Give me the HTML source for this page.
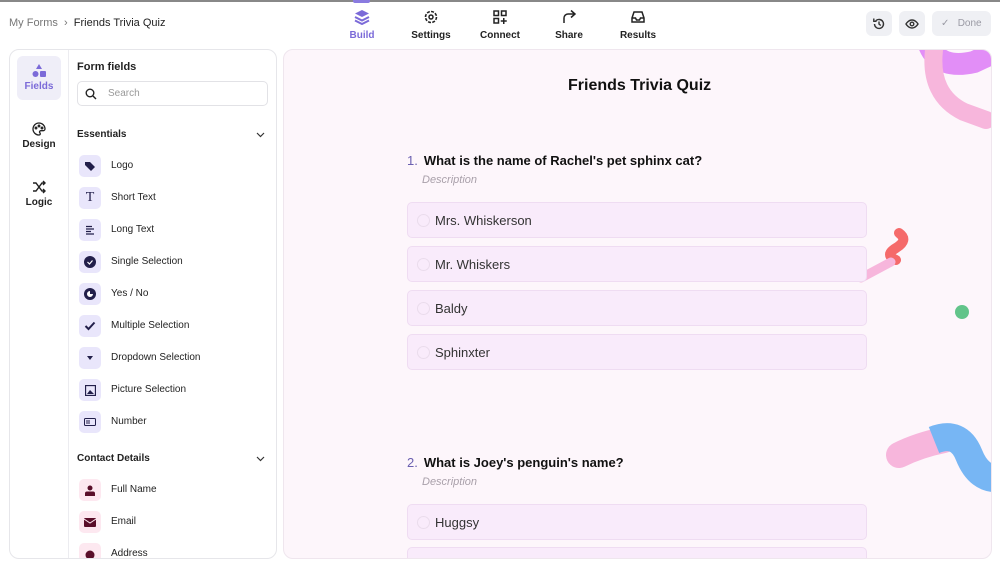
<!DOCTYPE html>
<html><head><meta charset="utf-8"><style>
*{box-sizing:border-box;margin:0;padding:0}
body{width:1000px;height:568px;overflow:hidden;background:#fff;font-family:"Liberation Sans",sans-serif;color:#222;position:relative}
.abs{position:absolute}
span{white-space:nowrap}
.top{left:0;top:0;width:1000px;height:2px;background:#888}
.crumb{left:9px;top:17px;font-size:11px;color:#777;white-space:nowrap}
.crumb b{color:#222;font-weight:normal}
.nav{top:9px;width:60px;text-align:center;font-size:10px;font-weight:bold;color:#222}
.nav svg{display:block;margin:0 auto 5px}
.btn{top:11px;height:25px;border-radius:6px;background:#eff0f4}
.panel{left:9px;top:49px;width:268px;height:510px;border:1px solid #e6e6ea;border-radius:10px;background:#fff;overflow:hidden}
.rail{left:0;top:0;width:59px;height:510px;border-right:1px solid #ececf0}
.ri{left:7px;width:44px;text-align:center;font-size:10px;font-weight:bold;color:#222}
.item{left:69px;width:180px;height:22px;font-size:10px;color:#222}
.item .ic{position:absolute;left:0;top:0;width:22px;height:22px;border-radius:5px;background:#e9e6fb;display:flex;align-items:center;justify-content:center}
.item span{position:absolute;left:32px;top:5px}
.sec{left:67px;font-size:10px;font-weight:bold;white-space:nowrap}
.canvas{left:283px;top:49px;width:709px;height:510px;border:1px solid #efe6ee;border-radius:10px;background:#fdf6fb;overflow:hidden}
.opt{left:123px;width:460px;height:36px;border:1px solid #efdcf2;border-radius:5px;background:#f9ebfb;font-size:13px;color:#333}
.opt i{position:absolute;left:9px;top:11px;width:13px;height:13px;border-radius:50%;border:1px solid #eadcec}
.opt span{position:absolute;left:27px;top:10px}
.q{left:123px;font-size:13px;font-weight:bold;color:#111;white-space:nowrap}
.q em{font-style:normal;font-weight:normal;color:#6a5fb0;margin-right:6px}
.desc{left:138px;font-size:11px;font-style:italic;color:#a9a0aa}
</style></head><body>
<div class="abs top"></div>
<div class="abs crumb">My Forms &nbsp;›&nbsp; <b>Friends Trivia Quiz</b></div>
<div class="abs" style="left:353px;top:0;width:17px;height:3px;background:#8a7be0;border-radius:0 0 2px 2px"></div>
<div class="abs nav" style="left:332px;color:#7b6ad8"><svg width="16" height="16" viewBox="0 0 16 16"><path d="M8 1 15 4.5 8 8 1 4.5Z" fill="#7b6ad8"/><path d="M1 8 8 11.5 15 8M1 11.5 8 15 15 11.5" stroke="#7b6ad8" stroke-width="2" fill="none"/></svg>Build</div>
<div class="abs nav" style="left:401px"><svg width="16" height="16" viewBox="0 0 16 16"><circle cx="8" cy="8" r="5.5" stroke="#222" stroke-width="1.6" fill="none" stroke-dasharray="3 1.3"/><circle cx="8" cy="8" r="2" stroke="#222" stroke-width="1.5" fill="none"/></svg>Settings</div>
<div class="abs nav" style="left:470px"><svg width="16" height="16" viewBox="0 0 16 16" fill="none" stroke="#222" stroke-width="1.5"><rect x="2" y="2" width="4.5" height="4.5"/><rect x="9.5" y="2" width="4.5" height="4.5"/><rect x="2" y="9.5" width="4.5" height="4.5"/><path d="M11.75 9v6M8.75 12h6"/></svg>Connect</div>
<div class="abs nav" style="left:539px"><svg width="16" height="16" viewBox="0 0 16 16" fill="none" stroke="#222" stroke-width="1.5"><path d="M3 14V9a4 4 0 0 1 4-4h7M10 1.5 14 5l-4 3.5"/></svg>Share</div>
<div class="abs nav" style="left:608px"><svg width="16" height="16" viewBox="0 0 16 16" fill="none" stroke="#222" stroke-width="1.5"><path d="M2 9 4 3h8l2 6v4H2Z M2 9h3.5l1 2h3l1-2H14"/></svg>Results</div>
<div class="abs btn" style="left:866px;width:26px"><svg class="abs" style="left:6px;top:6px" width="14" height="14" viewBox="0 0 14 14" fill="none" stroke="#333" stroke-width="1.4"><path d="M2.5 7a4.5 4.5 0 1 0 1.3-3.2M1.8 1.5v2.8h2.8M7 4.5V7l1.8 1.5"/></svg></div>
<div class="abs btn" style="left:899px;width:26px"><svg class="abs" style="left:6px;top:6px" width="14" height="14" viewBox="0 0 14 14" fill="none" stroke="#333" stroke-width="1.4"><path d="M1 7s2.3-4 6-4 6 4 6 4-2.3 4-6 4-6-4-6-4Z"/><circle cx="7" cy="7" r="1.8"/></svg></div>
<div class="abs btn" style="left:932px;width:59px;font-size:10px;color:#9a9aa4"><span class="abs" style="left:9px;top:7px;line-height:12px">✓&nbsp;&nbsp; Done</span></div>

<div class="abs panel">
 <div class="abs rail">
  <div class="abs ri" style="top:6px;height:44px;background:#efeef8;border-radius:6px;color:#7b6ad8;padding-top:8px"><svg width="14" height="14" viewBox="0 0 14 14" fill="#7b6ad8" style="display:block;margin:0 auto 3px"><path d="M7 0 10 5H4Z"/><circle cx="3.5" cy="10" r="3"/><rect x="8" y="7" width="6" height="6" rx="1"/></svg>Fields</div>
  <div class="abs ri" style="top:72px"><svg width="14" height="14" viewBox="0 0 14 14" fill="none" stroke="#222" stroke-width="1.3" style="display:block;margin:0 auto 3px"><path d="M7 1a6 6 0 0 0 0 12c1.5 0 1.5-1.5.8-2.3-.7-.8 0-2 1-2H11a2 2 0 0 0 2-2A6 6 0 0 0 7 1Z"/><circle cx="4" cy="6" r=".8"/><circle cx="7" cy="4" r=".8"/><circle cx="10" cy="6" r=".8"/></svg>Design</div>
  <div class="abs ri" style="top:130px"><svg width="14" height="14" viewBox="0 0 14 14" fill="none" stroke="#222" stroke-width="1.4" style="display:block;margin:0 auto 3px"><path d="M1 3h3l6 8h3M1 11h3l6-8h3M11 1l2 2-2 2M11 9l2 2-2 2"/></svg>Logic</div>
 </div>
 <div class="abs" style="left:67px;top:11px;font-size:11px;font-weight:bold;white-space:nowrap">Form fields</div>
 <div class="abs" style="left:67px;top:31px;width:191px;height:25px;border:1px solid #e2e2e6;border-radius:5px"><svg class="abs" style="left:7px;top:6px" width="12" height="12" viewBox="0 0 12 12" fill="none" stroke="#222" stroke-width="1.4"><circle cx="5" cy="5" r="3.8"/><path d="M8 8l3 3"/></svg><span class="abs" style="left:30px;top:6px;font-size:10px;color:#999">Search</span></div>
 <div class="abs sec" style="top:79px">Essentials</div>
 <svg class="abs" style="left:246px;top:82px" width="9" height="6" viewBox="0 0 9 6"><path d="M1 1l3.5 3.5L8 1" stroke="#333" fill="none" stroke-width="1.2"/></svg>
 <div class="abs item" style="top:105px"><div class="ic"><svg width="12" height="12" viewBox="0 0 12 12"><path d="M1 2h5l5 5-4 4-6-6Z" fill="#221f4a"/></svg></div><span>Logo</span></div>
 <div class="abs item" style="top:137px"><div class="ic" style="font-family:'Liberation Serif',serif;font-size:14px;color:#221f4a">T</div><span>Short Text</span></div>
 <div class="abs item" style="top:169px"><div class="ic"><svg width="10" height="10" viewBox="0 0 10 10" stroke="#221f4a" stroke-width="1.3"><path d="M1 1.5h6M1 4h8M1 6.5h5M1 9h8"/></svg></div><span>Long Text</span></div>
 <div class="abs item" style="top:201px"><div class="ic"><svg width="12" height="12" viewBox="0 0 12 12"><circle cx="6" cy="6" r="6" fill="#221f4a"/><path d="M3.5 6l2 2 3-3.5" stroke="#fff" fill="none" stroke-width="1.2"/></svg></div><span>Single Selection</span></div>
 <div class="abs item" style="top:233px"><div class="ic"><svg width="12" height="12" viewBox="0 0 12 12"><circle cx="6" cy="6" r="6" fill="#221f4a"/><path d="M6 3a3 3 0 1 0 3 3H6Z" fill="#fff"/></svg></div><span>Yes / No</span></div>
 <div class="abs item" style="top:265px"><div class="ic"><svg width="12" height="12" viewBox="0 0 12 12"><path d="M1.5 6l3 3 6-6.5" stroke="#221f4a" fill="none" stroke-width="2"/></svg></div><span>Multiple Selection</span></div>
 <div class="abs item" style="top:297px"><div class="ic"><svg width="8" height="5" viewBox="0 0 8 5"><path d="M1 0h6L4 4Z" fill="#221f4a"/></svg></div><span>Dropdown Selection</span></div>
 <div class="abs item" style="top:329px"><div class="ic"><svg width="11" height="11" viewBox="0 0 11 11"><rect x=".5" y=".5" width="10" height="10" fill="none" stroke="#221f4a" stroke-width="1.3"/><path d="M2 9l3-4 4 4Z" fill="#221f4a"/></svg></div><span>Picture Selection</span></div>
 <div class="abs item" style="top:361px"><div class="ic"><svg width="12" height="8" viewBox="0 0 12 8"><rect x=".5" y=".5" width="11" height="7" rx="1" fill="none" stroke="#221f4a"/><path d="M3 2v4M5 2v4" stroke="#221f4a"/></svg></div><span>Number</span></div>
 <div class="abs sec" style="top:403px">Contact Details</div>
 <svg class="abs" style="left:246px;top:406px" width="9" height="6" viewBox="0 0 9 6"><path d="M1 1l3.5 3.5L8 1" stroke="#333" fill="none" stroke-width="1.2"/></svg>
 <div class="abs item" style="top:429px"><div class="ic" style="background:#fde8f0"><svg width="10" height="11" viewBox="0 0 10 11" fill="#5a0f2a"><circle cx="5" cy="3" r="2.5"/><path d="M0 11V8.5Q0 6.5 2 6.5h6q2 0 2 2V11Z"/></svg></div><span>Full Name</span></div>
 <div class="abs item" style="top:461px"><div class="ic" style="background:#fde8f0"><svg width="12" height="9" viewBox="0 0 12 9"><rect width="12" height="9" rx="1" fill="#5a0f2a"/><path d="M0 1l6 4 6-4" stroke="#fde8f0" fill="none"/></svg></div><span>Email</span></div>
 <div class="abs item" style="top:493px"><div class="ic" style="background:#fde8f0"><svg width="10" height="10"><circle cx="5" cy="6" r="4.5" fill="#5a0f2a"/></svg></div><span>Address</span></div>
</div>

<div class="abs canvas">
 <svg class="abs" style="left:0;top:0" width="709" height="510" viewBox="0 0 709 510">
  <path d="M645 -5 Q655 20 690 12 L705 5" stroke="#e28ef7" stroke-width="22" fill="none" stroke-linecap="round"/>
  <path d="M650 0 Q645 45 680 62 L702 70" stroke="#f7b6dc" stroke-width="18" fill="none" stroke-linecap="round"/>
  <path d="M615 183 Q625 190 612 198 Q600 205 612 210" stroke="#f56a6a" stroke-width="10" fill="none" stroke-linecap="round"/>
  <path d="M577 228 L607 212" stroke="#f7b6dc" stroke-width="9" fill="none" stroke-linecap="round"/>
  <circle cx="678" cy="262" r="7" fill="#62c48a"/>
  <path d="M615 405 Q635 395 660 390" stroke="#f7b6dc" stroke-width="26" fill="none" stroke-linecap="round"/>
  <path d="M650 390 Q675 380 685 405 Q695 430 715 428" stroke="#77b6f4" stroke-width="28" fill="none"/>
 </svg>
 <div class="abs" style="left:284px;top:27px;font-size:16px;font-weight:bold;color:#111;white-space:nowrap">Friends Trivia Quiz</div>
 <div class="abs q" style="top:103px"><em>1.</em>What is the name of Rachel's pet sphinx cat?</div>
 <div class="abs desc" style="top:124px">Description</div>
 <div class="abs opt" style="top:152px"><i></i><span>Mrs. Whiskerson</span></div>
 <div class="abs opt" style="top:196px"><i></i><span>Mr. Whiskers</span></div>
 <div class="abs opt" style="top:240px"><i></i><span>Baldy</span></div>
 <div class="abs opt" style="top:284px"><i></i><span>Sphinxter</span></div>
 <div class="abs q" style="top:405px"><em>2.</em>What is Joey's penguin's name?</div>
 <div class="abs desc" style="top:426px">Description</div>
 <div class="abs opt" style="top:454px"><i></i><span>Huggsy</span></div>
 <div class="abs opt" style="top:497px"></div>
</div>
</body></html>
